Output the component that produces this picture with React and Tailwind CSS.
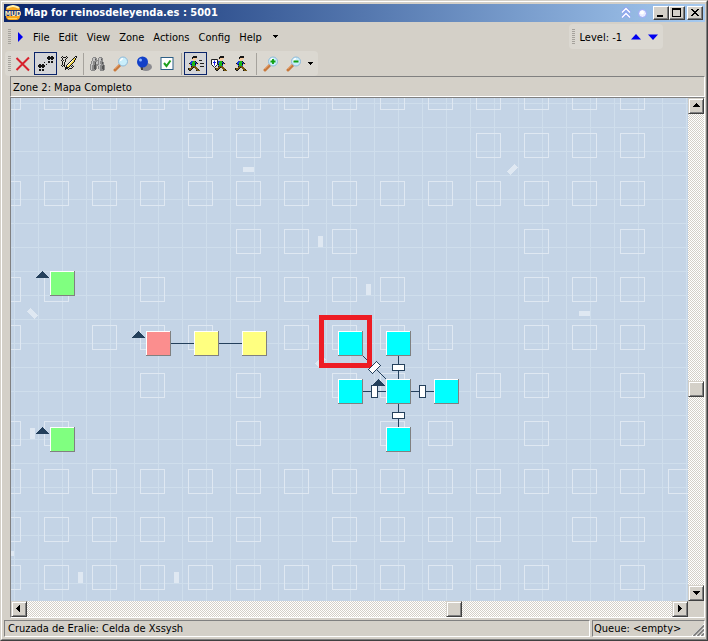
import { useState } from "react";

const GHOST_ROWS = [
  "##############.",
  "....###...####.",
  "##############.",
  ".....###...#.#.",
  "##.#.####..###.",
  "#.###.####.###.",
  "...#.#.##.##.#.",
  "##...#..##.#.#.",
  "###############",
  "######.####.##.",
  "############.#.",
];

const GHOST_DOORS = [
  { x: 232, y: 69, w: 11, h: 5 },
  { x: 307, y: 138, w: 5, h: 11 },
  { x: 19, y: 330, w: 5, h: 11 },
  { x: 355, y: 186, w: 5, h: 11 },
  { x: 568, y: 213, w: 11, h: 5 },
  { x: -8, y: 453, w: 11, h: 5 },
  { x: 67, y: 474, w: 5, h: 11 },
  { x: 163, y: 474, w: 5, h: 11 },
];

const ROOMS = [
  { x: 39, y: 173, color: "#80ff80" },
  { x: 39, y: 329, color: "#80ff80" },
  { x: 135, y: 233, color: "#fb8e8e" },
  { x: 183, y: 233, color: "#ffff80" },
  { x: 231, y: 233, color: "#ffff80" },
  { x: 327, y: 233, color: "#00ffff" },
  { x: 375, y: 233, color: "#00ffff" },
  { x: 327, y: 281, color: "#00ffff" },
  { x: 375, y: 281, color: "#00ffff" },
  { x: 423, y: 281, color: "#00ffff" },
  { x: 375, y: 329, color: "#00ffff" },
];

const UP_EXITS = [
  { x: 25, y: 173 },
  { x: 25, y: 329 },
  { x: 121, y: 233 },
  { x: 361, y: 281 },
];

const DOORS = [
  { x: 381, y: 266, w: 13, h: 7 },
  { x: 381, y: 314, w: 13, h: 7 },
  { x: 360, y: 287, w: 7, h: 13 },
  { x: 408, y: 287, w: 7, h: 13 },
];

const PALETTE = {
  k: "#151515",
  b: "#75560f",
  s: "#f3c9a0",
  g: "#18b818",
  B: "#1c3fd8",
  w: "#ffffff",
  y: "#f4d848",
  n: "#8a8a8a",
  l: "#c4c4c4",
  d: "#555555",
};

const RUNNER = [
  ".....kkkk....",
  "....kkkkk....",
  "....kssss....",
  "....ssss.....",
  ".....ss......",
  "...BBggk.....",
  "..BBgggBk....",
  ".kBBgggkBks..",
  ".sBkgggk.ss..",
  ".s.BgggB.....",
  "...kbbbb.....",
  "...bbkbbb....",
  "kbbbk..bbb...",
  "kbbk....bbk..",
  ".kk.....kbbb.",
];

const FOOTPRINTS = [
  "..........kk.kk.",
  ".........kkkkkkk",
  ".........kkkkkkk",
  "..........kk.kk.",
  "................",
  "..........kk.kk.",
  "......k...kk.kk.",
  "................",
  ".kk.kk..k.......",
  "kkkkkkk.........",
  "kkkkkkk.........",
  ".kk.kk..........",
  "................",
  ".kk.kk..........",
  ".kk.kk..........",
];

const PENCIL = [
  ".k...k........kk",
  "k.kkk.k......kwk",
  ".k...k......kyk.",
  ".k..k......kyyk.",
  "k.k.k.....kwyk..",
  ".k..k....kwyyk..",
  ".k.k....kwyyk...",
  ".k.k...kwyyk....",
  ".k.k..kwyyk.....",
  "k.kk.kwyyk.k....",
  ".k.k.kyyk.k.k...",
  "....kkkk...k....",
  "....kkk.kkk.....",
  "....k..k........",
];

const BINOCULARS = [
  "...nnn...nnn...",
  "..nllnn.nllnn..",
  "..nlldn.nlldn..",
  "..nllnnnnllnn..",
  ".nlnnnnlnlnnn..",
  ".nlnndllnlnndn.",
  ".nlnndllnlnndn.",
  "nllnndnnnllnnn.",
  "nlnnddnnllnnndn",
  "nlnnddn.nlnnddn",
  "nlnnddn.nlnnddn",
  "nlnnddn.nlnnddn",
  "nlnnnd...lnnndn",
  ".nnnn.....nnnn.",
];

const Pixels = ({ rows, x = 0, y = 0 }) => (
  <g transform={`translate(${x} ${y})`} shapeRendering="crispEdges">
    {rows.flatMap((row, r) =>
      [...row].map((c, i) =>
        c === "." ? null : <rect key={`${r}-${i}`} x={i} y={r} width="1" height="1" fill={PALETTE[c]} />
      )
    )}
  </g>
);

const Icon = ({ children, w = 16, h = 16 }) => (
  <svg width={w} height={h} viewBox={`0 0 ${w} ${h}`} className="shrink-0" aria-hidden="true">
    {children}
  </svg>
);

const Lens = ({ children }) => (
  <Icon>
    <path d="M2 14 L7 9" stroke="#c8793c" strokeWidth="3" strokeLinecap="round" />
    <path d="M1.500 13 L6 8.500" stroke="#f0b487" strokeWidth="1" />
    <circle cx="10" cy="5.500" r="4.500" fill="#c9eefb" stroke="#8fb9d8" />
    <path d="M7.500 5 A3 3 0 0 1 10 2.500" fill="none" stroke="#fff" strokeWidth="1.500" />
    {children}
  </Icon>
);

const Grip = () => (
  <span className="h-4 w-[3px] shrink-0 bg-[repeating-linear-gradient(#a5a29c_0_1px,transparent_1px_2px)]" />
);

const Separator = () => (
  <span className="flex w-[6px] justify-center">
    <span className="h-[22px] w-px bg-[#a6a39d]" />
  </span>
);

const ToolButton = ({ label, pressed, onClick, children }) => (
  <button
    type="button"
    aria-label={label}
    aria-pressed={pressed}
    onClick={onClick}
    className={
      pressed
        ? "flex h-[23px] w-[23px] items-center justify-center border border-[#0a246a] bg-[#d4d5d8]"
        : "flex h-[23px] w-[23px] items-center justify-center border border-transparent"
    }
  >
    {children}
  </button>
);

const ARROWS = {
  up: "M4 7h7v-1h-1v-1h-1v-1h-1v-1h-1v1h-1v1h-1v1h-1z",
  down: "M4 4h7v1h-1v1h-1v1h-1v1h-1v-1h-1v-1h-1v-1h-1z",
  left: "M8 2v7h-1v-1h-1v-1h-1v-1h-1v-1h1v-1h1v-1h1v-1z",
  right: "M5 2v7h1v-1h1v-1h1v-1h1v-1h-1v-1h-1v-1h-1v-1z",
};

const RAISED =
  "h-4 w-4 shrink-0 border border-t-[#d4d0c8] border-l-[#d4d0c8] border-r-[#404040] border-b-[#404040] bg-[#d4d0c8] shadow-[inset_1px_1px_#fff,inset_-1px_-1px_#808080]";
const TRACK = "bg-[repeating-conic-gradient(#fff_0_25%,#d4d0c8_0_50%)] bg-[length:2px_2px]";

const ScrollButton = ({ dir }) => (
  <button type="button" aria-label={`Scroll ${dir}`} className={RAISED}>
    <svg width="14" height="14" viewBox="0 0 14 12" shapeRendering="crispEdges">
      <path d={ARROWS[dir]} />
    </svg>
  </button>
);

const CaptionButton = ({ label, children }) => (
  <button
    type="button"
    aria-label={label}
    className="h-[14px] w-4 border border-t-white border-l-white border-r-[#404040] border-b-[#404040] bg-[#d4d0c8] shadow-[inset_-1px_-1px_#808080]"
  >
    <svg width="14" height="12" viewBox="0 0 14 12" shapeRendering="crispEdges">
      {children}
    </svg>
  </button>
);

const TitleBar = () => (
  <header className="flex h-[18px] items-center bg-linear-to-r from-[#0a246a] to-[#a6caf0] pr-[2px] pl-px">
    <Icon>
      <rect x="1" y="1" width="14" height="14" rx="4" fill="#f6a51c" />
      <path d="M2 3 Q8 -1 14 3" fill="none" stroke="#fff2b0" strokeWidth="2" />
      <path d="M0 5h16v6h-16z" fill="#1b2f78" />
      <text x="8" y="11" fontSize="7" fontWeight="bold" textAnchor="middle" fill="#ffe9b8">
        MUD
      </text>
      <path d="M3 13.500h9" stroke="#ffd766" />
    </Icon>
    <h1 className="ml-[3px] flex-1 text-[11px] leading-4 font-bold text-white">
      Map for reinosdeleyenda.es : 5001
    </h1>
    <button type="button" aria-label="Roll up" className="mr-[7px]">
      <Icon w={10} h={12}>
        <path d="M1 5.500 5 1.500 9 5.500M1 10.500 5 6.500 9 10.500" fill="none" stroke="#8d9cf4" strokeWidth="3" />
        <path d="M1 5.500 5 1.500 9 5.500M1 10.500 5 6.500 9 10.500" fill="none" stroke="#fff" strokeWidth="1.500" />
      </Icon>
    </button>
    <button type="button" aria-label="Pin" className="mr-[6px]">
      <Icon w={9} h={9}>
        <circle cx="4.500" cy="4.500" r="4" fill="#e9ecff" stroke="#9aa5f5" />
        <circle cx="4" cy="3.500" r="2" fill="#fff" />
      </Icon>
    </button>
    <CaptionButton label="Minimize">
      <path d="M3 8h6v2h-6z" />
    </CaptionButton>
    <CaptionButton label="Maximize">
      <path fillRule="evenodd" d="M2 1h9v9h-9zM3 3v6h7v-6z" />
    </CaptionButton>
    <span className="w-[2px]" />
    <CaptionButton label="Close">
      <path d="M3 2h2v1h1v1h2v-1h1v-1h2v1h-1v1h-1v1h-1v1h1v1h1v1h1v1h-2v-1h-1v-1h-2v1h-1v1h-2v-1h1v-1h1v-1h1v-1h-1v-1h-1v-1h-1z" />
    </CaptionButton>
  </header>
);

const MenuBar = () => (
  <div className="flex items-start justify-between pt-[2px] pr-[42px] pl-1">
    <nav className="flex h-[25px] items-center">
      <Grip />
      <span className="ml-[6px] flex w-4">
        <Icon w={7} h={10}>
          <path d="M1 0 6 5 1 10z" fill="#0000f0" />
        </Icon>
      </span>
      <div className="flex gap-[9px] pt-[2px]">
        {["File", "Edit", "View", "Zone", "Actions", "Config", "Help"].map((item) => (
          <button key={item} type="button">
            {item}
          </button>
        ))}
      </div>
      <button type="button" aria-label="More menus" className="ml-[11px]">
        <Icon w={5} h={3}>
          <path d="M0 0h5v1h-1v1h-1v1h-1v-1h-1v-1h-1z" shapeRendering="crispEdges" />
        </Icon>
      </button>
    </nav>
    <div className="flex h-[25px] items-center rounded-sm bg-[#dbd8d1] px-[3px]">
      <Grip />
      <span className="ml-[5px] pt-[2px]">Level: -1</span>
      <button type="button" aria-label="Level up" className="ml-[9px]">
        <Icon w={10} h={6}>
          <path d="M0 5.500 5 0 10 5.500z" fill="#0000f0" />
        </Icon>
      </button>
      <button type="button" aria-label="Level down" className="mr-[2px] ml-[7px]">
        <Icon w={10} h={6}>
          <path d="M0 0.500 5 6 10 0.500z" fill="#0000f0" />
        </Icon>
      </button>
    </div>
  </div>
);

const ToolBar = () => {
  const [follow, setFollow] = useState(true);
  const [mode, setMode] = useState("fast");

  return (
    <div className="mt-[2px] ml-px flex h-[25px] w-fit items-center rounded-sm bg-[#dbd8d1] pr-[5px] pl-[3px]">
      <Grip />
      <ToolButton label="Delete">
        <Icon>
          <path d="M1.500 2 14 14.500M14 1.500 1.500 14" stroke="#d8202c" strokeWidth="2" />
        </Icon>
      </ToolButton>
      <ToolButton label="Follow mode" pressed={follow} onClick={() => setFollow(!follow)}>
        <Icon>
          <Pixels rows={FOOTPRINTS} />
        </Icon>
      </ToolButton>
      <ToolButton label="Create mode">
        <Icon>
          <Pixels rows={PENCIL} />
        </Icon>
      </ToolButton>
      <Separator />
      <ToolButton label="Find">
        <Icon>
          <Pixels rows={BINOCULARS} y={1} />
        </Icon>
      </ToolButton>
      <ToolButton label="Zoom">
        <Lens />
      </ToolButton>
      <ToolButton label="Center">
        <Icon>
          <ellipse cx="10" cy="11" rx="6" ry="4" fill="#8b8b90" />
          <path d="M6 10v4" stroke="#444" strokeWidth="2" />
          <circle cx="6.500" cy="6" r="5.500" fill="#1140c8" />
          <circle cx="4.500" cy="4" r="1.500" fill="#8fb4ff" />
        </Icon>
      </ToolButton>
      <ToolButton label="Properties">
        <Icon>
          <rect x="2" y="1.500" width="12" height="12" fill="#fff" stroke="#2d5f86" />
          <path d="M5 7 7.500 10 11.500 4.500" fill="none" stroke="#1fa01f" strokeWidth="2" />
        </Icon>
      </ToolButton>
      <Separator />
      <ToolButton label="Fast walk" pressed={mode === "fast"} onClick={() => setMode("fast")}>
        <Icon>
          <Pixels rows={RUNNER} />
          <path d="M11 4.500h3M12 7.500h4M12 10.500h4" stroke="#222" shapeRendering="crispEdges" />
        </Icon>
      </ToolButton>
      <ToolButton label="Safe walk" pressed={mode === "safe"} onClick={() => setMode("safe")}>
        <Icon>
          <Pixels rows={RUNNER} x={4} />
          <path d="M.5 3.500h6v5l-3 3-3-3z" fill="#fff" stroke="#222" />
          <path d="M3.500 4.500v5M2 6.500h3" stroke="#2020e0" />
        </Icon>
      </ToolButton>
      <ToolButton label="Slow walk" pressed={mode === "slow"} onClick={() => setMode("slow")}>
        <Icon>
          <Pixels rows={RUNNER} x={1} />
        </Icon>
      </ToolButton>
      <Separator />
      <ToolButton label="Zoom in">
        <Lens>
          <path d="M10 3v5M7.500 5.500h5" stroke="#10a010" strokeWidth="1.800" />
        </Lens>
      </ToolButton>
      <ToolButton label="Zoom out">
        <Lens>
          <path d="M7.500 5.500h5" stroke="#10a010" strokeWidth="2" />
        </Lens>
      </ToolButton>
      <button type="button" aria-label="More tools" className="ml-[3px]">
        <Icon w={5} h={3}>
          <path d="M0 0h5v1h-1v1h-1v1h-1v-1h-1v-1h-1z" shapeRendering="crispEdges" />
        </Icon>
      </button>
    </div>
  );
};

const MapCanvas = () => (
  <svg width="100%" height="100%" className="absolute inset-0 bg-[#c4d4e6]" shapeRendering="crispEdges">
    <defs>
      <pattern id="grid" x="3" y="5" width="24" height="24" patternUnits="userSpaceOnUse">
        <path d="M0 0h24v1h-23v23h-1z" fill="#cfdeec" />
      </pattern>
    </defs>
    <rect width="100%" height="100%" fill="url(#grid)" />

    {/* rooms of the level below */}
    {GHOST_ROWS.flatMap((row, r) =>
      [...row].map((c, i) =>
        c === "#" ? (
          <rect
            key={`${r}-${i}`}
            x={i * 48 - 14.5}
            y={r * 48 - 12.5}
            width="24"
            height="24"
            fill="none"
            stroke="#dfe8f2"
          />
        ) : null
      )
    )}
    {GHOST_DOORS.map((d) => (
      <rect key={`${d.x}-${d.y}`} x={d.x} y={d.y} width={d.w} height={d.h} fill="#dfe8f2" />
    ))}
    <rect x="-5.500" y="-2.500" width="11" height="5" fill="#dfe8f2" transform="translate(501.500 71.500) rotate(-45)" />
    <rect x="-5.500" y="-2.500" width="11" height="5" fill="#dfe8f2" transform="translate(21.500 215.500) rotate(45)" />
    <rect x="-5.500" y="-2.500" width="11" height="5" fill="#dfe8f2" transform="translate(309.500 263.500) rotate(-45)" />

    {/* exits */}
    <path
      d="M160 245.500h23M208 245.500h23M352 293.500h23M400 293.500h23M387.500 258v23M387.500 306v23M352 258l23 23"
      stroke="#24405c"
    />

    {ROOMS.map((room) => (
      <g key={`${room.x}-${room.y}`} transform={`translate(${room.x} ${room.y})`}>
        <rect width="25" height="25" fill="#808080" />
        <rect width="24" height="24" fill="#fff" />
        <rect x="1" y="1" width="23" height="23" fill={room.color} />
      </g>
    ))}
    {UP_EXITS.map((e) => (
      <path
        key={`${e.x}-${e.y}`}
        transform={`translate(${e.x} ${e.y})`}
        d="M0 7v-1h1v-1h1v-1h1v-1h1v-1h1v-1h1v-1h1v1h1v1h1v1h1v1h1v1h1v1h1v1z"
        fill="#24405c"
      />
    ))}

    <rect x="310.500" y="219.500" width="48" height="48" fill="none" stroke="#ed1c24" strokeWidth="5" />

    {DOORS.map((d) => (
      <rect
        key={`${d.x}-${d.y}`}
        x={d.x + 0.5}
        y={d.y + 0.5}
        width={d.w - 1}
        height={d.h - 1}
        fill="#fff"
        stroke="#24405c"
      />
    ))}
    <rect
      x="-6"
      y="-3"
      width="12"
      height="6"
      fill="#fff"
      stroke="#24405c"
      transform="translate(363.500 269.500) rotate(-45)"
    />
  </svg>
);

const StatusBar = () => (
  <footer className="mt-[2px] flex h-[17px] gap-[2px] whitespace-nowrap">
    <div className="flex flex-1 items-center border border-t-[#808080] border-r-white border-b-white border-l-[#808080] pt-px pl-[3px]">
      Cruzada de Eralie: Celda de Xssysh
    </div>
    <div className="flex w-[113px] items-center justify-between border border-t-[#808080] border-r-white border-b-white border-l-[#808080] pl-px">
      <span className="pt-px">Queue: &lt;empty&gt;</span>
      <span className="flex h-full items-end">
        <Icon w={12} h={12}>
          <path d="M0 12 12 0M4 12 12 4M8 12 12 8" stroke="#fff" />
          <path d="M1.500 12 12 1.500M5.500 12 12 5.500M9.500 12 12 9.500" stroke="#808080" strokeWidth="1.800" />
        </Icon>
      </span>
    </div>
  </footer>
);

export default function App() {
  return (
    <div className="flex min-h-screen border border-t-[#d4d0c8] border-r-[#404040] border-b-[#404040] border-l-[#d4d0c8] bg-[#d4d0c8] font-['DejaVu_Sans_Condensed','DejaVu_Sans',sans-serif] text-[11px] leading-[14px] text-black">
      <main className="flex min-w-0 flex-1 flex-col border border-t-white border-r-[#808080] border-b-[#808080] border-l-white py-[2px] pr-px pl-[2px]">
        <TitleBar />
        <MenuBar />
        <ToolBar />
        <div className="ml-[6px] flex flex-1 flex-col">
          <div className="flex h-[21px] items-center border border-t-[#808080] border-r-white border-b-white border-l-[#808080] pt-[2px] pl-[2px]">
            Zone 2: Mapa Completo
          </div>
          <div className="flex min-h-80 flex-1 flex-col border border-t-[#808080] border-r-white border-b-white border-l-[#808080]">
            <div className="flex flex-1">
              <div className="relative flex-1 overflow-hidden">
                <MapCanvas />
              </div>
              <div className={`flex w-4 flex-col ${TRACK}`}>
                <ScrollButton dir="up" />
                <span className="flex-[267]" />
                <span className={RAISED} />
                <span className="flex-[188]" />
                <ScrollButton dir="down" />
              </div>
            </div>
            <div className="flex">
              <div className={`flex flex-1 ${TRACK}`}>
                <ScrollButton dir="left" />
                <span className="flex-[419]" />
                <span className={RAISED} />
                <span className="flex-[210]" />
                <ScrollButton dir="right" />
              </div>
              <span className="h-4 w-4" />
            </div>
          </div>
        </div>
        <StatusBar />
      </main>
    </div>
  );
}
